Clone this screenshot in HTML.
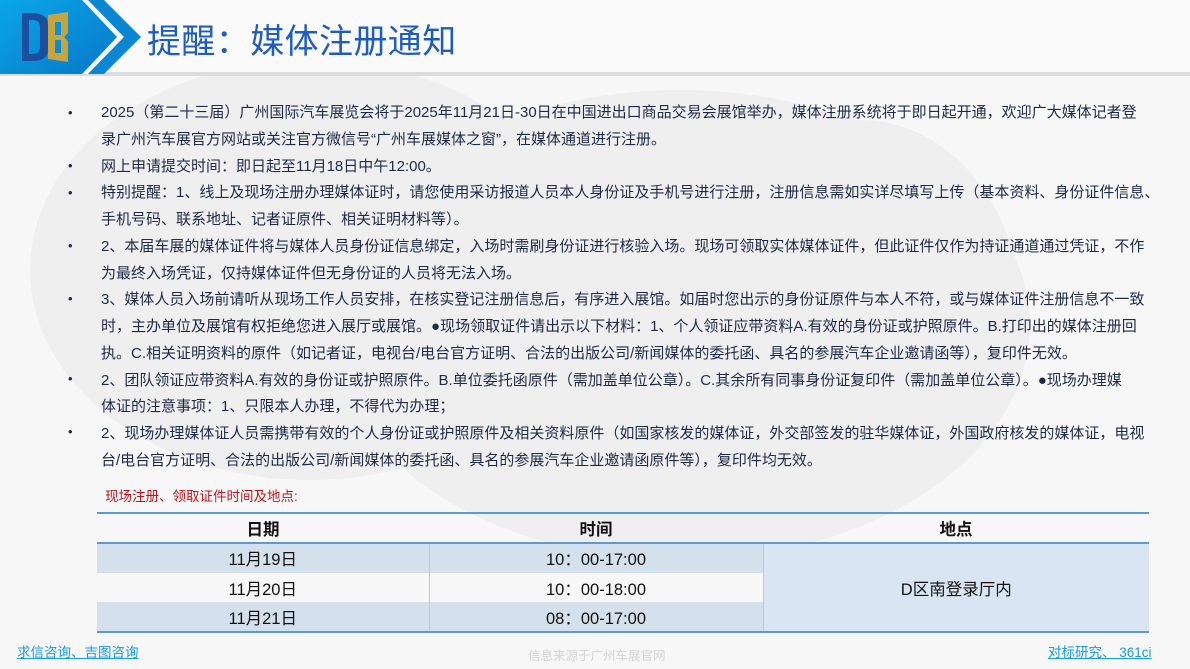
<!DOCTYPE html>
<html><head><meta charset="utf-8"><style>
*{margin:0;padding:0;box-sizing:border-box}
body{width:1190px;height:669px;overflow:hidden;position:relative;background:#f7f7f7;font-family:"Liberation Sans","Noto Sans CJK SC",sans-serif;}
.blob{position:absolute;background:#efefef;border-radius:50%}
.hdr{position:absolute;left:0;top:0;width:1190px;height:72px;background:#fafafa}
.hline{position:absolute;left:0;top:72px;width:1190px;height:4px;background:#dcdcdc}
.title{position:absolute;left:147px;top:14px;font-size:34px;color:#1f5cc0;white-space:nowrap;font-family:"Noto Sans CJK SC",sans-serif;letter-spacing:0.4px}
.txt{position:absolute;left:101px;top:100px;font-size:15px;line-height:26.75px;color:#1e2a46;white-space:nowrap}
.b{position:absolute;left:68px;font-size:13px;color:#1e2a46}
.red{position:absolute;left:105px;top:485px;font-size:13.5px;color:#c0141c;white-space:nowrap}
table{position:absolute;left:97px;top:512px;width:1052px;border-collapse:collapse;font-size:16.5px;color:#111}
td,th{text-align:center;height:29.7px;padding:0}
th{font-weight:bold;border-top:2px solid #5b9bd5;border-bottom:2px solid #5b9bd5;height:30px}
tr:last-child td,td.loc{border-bottom:2px solid #5b9bd5}
.s td{background:#d4e0eb}
.loc{background:#d9e5f2!important}
td.c1{border-right:1px solid #b8c9dc}
.f{position:absolute;top:641px;font-size:13.5px;color:#1a9ae8;text-decoration:underline;white-space:nowrap}
</style></head><body>
<div class="blob" style="left:30px;top:60px;width:560px;height:420px"></div>
<div class="blob" style="left:330px;top:90px;width:700px;height:470px"></div>
<div class="blob" style="left:700px;top:120px;width:320px;height:380px"></div>
<div class="hdr"></div>
<div class="hline"></div>
<svg style="position:absolute;left:0;top:0" width="145" height="74">
<defs><linearGradient id="g" x1="0" y1="0" x2="1" y2="1"><stop offset="0" stop-color="#0aa6e8"/><stop offset="1" stop-color="#0877c8"/></linearGradient></defs>
<polygon points="0,0 84,0 118,37 84,74 0,74" fill="url(#g)"/>
<polygon points="86,0 104,0 141,37 104,74 86,74 122,37" fill="#0b86d2"/>
<polygon points="82,0 88,0 124,37 88,74 82,74 117,37" fill="#fff" opacity=".9"/>
<path d="M22 13 h10 q16 0 16 12 v24 q0 12 -16 12 h-10 z M29 20 v34 h3 q8 0 8 -7 v-20 q0 -7 -8 -7z" fill="#1a4fa0"/>
<path d="M48 15 l20 -3 v21 l-4 4 l4 4 v21 l-20 -3 z M55 22 v13 l6 0 v-13z M55 40 v13 l6 0 v-13z" fill="#c8a43c"/>
</svg>
<div class="title">提醒：媒体注册通知</div>
<div class="b" style="top:105px">•</div>
<div class="b" style="top:158px">•</div>
<div class="b" style="top:185px">•</div>
<div class="b" style="top:238px">•</div>
<div class="b" style="top:291px">•</div>
<div class="b" style="top:371px">•</div>
<div class="b" style="top:424px">•</div>
<div class="txt">2025（第二十三届）广州国际汽车展览会将于2025年11月21日-30日在中国进出口商品交易会展馆举办，媒体注册系统将于即日起开通，欢迎广大媒体记者登<br>录广州汽车展官方网站或关注官方微信号“广州车展媒体之窗”，在媒体通道进行注册。<br>网上申请提交时间：即日起至11月18日中午12:00。<br>特别提醒：1、线上及现场注册办理媒体证时，请您使用采访报道人员本人身份证及手机号进行注册，注册信息需如实详尽填写上传（基本资料、身份证件信息、<br>手机号码、联系地址、记者证原件、相关证明材料等）。<br>2、本届车展的媒体证件将与媒体人员身份证信息绑定，入场时需刷身份证进行核验入场。现场可领取实体媒体证件，但此证件仅作为持证通道通过凭证，不作<br>为最终入场凭证，仅持媒体证件但无身份证的人员将无法入场。<br>3、媒体人员入场前请听从现场工作人员安排，在核实登记注册信息后，有序进入展馆。如届时您出示的身份证原件与本人不符，或与媒体证件注册信息不一致<br>时，主办单位及展馆有权拒绝您进入展厅或展馆。●现场领取证件请出示以下材料：1、个人领证应带资料A.有效的身份证或护照原件。B.打印出的媒体注册回<br>执。C.相关证明资料的原件（如记者证，电视台/电台官方证明、合法的出版公司/新闻媒体的委托函、具名的参展汽车企业邀请函等），复印件无效。<br>2、团队领证应带资料A.有效的身份证或护照原件。B.单位委托函原件（需加盖单位公章）。C.其余所有同事身份证复印件（需加盖单位公章）。●现场办理媒<br>体证的注意事项：1、只限本人办理，不得代为办理；<br>2、现场办理媒体证人员需携带有效的个人身份证或护照原件及相关资料原件（如国家核发的媒体证，外交部签发的驻华媒体证，外国政府核发的媒体证，电视<br>台/电台官方证明、合法的出版公司/新闻媒体的委托函、具名的参展汽车企业邀请函原件等），复印件均无效。</div>
<div class="red">现场注册、领取证件时间及地点:</div>
<table>
<tr><th style="width:332px">日期</th><th style="width:334px">时间</th><th>地点</th></tr>
<tr class="s"><td class="c1">11月19日</td><td class="c1">10：00-17:00</td><td class="loc" rowspan="3">D区南登录厅内</td></tr>
<tr><td class="c1">11月20日</td><td class="c1">10：00-18:00</td></tr>
<tr class="s"><td class="c1">11月21日</td><td class="c1">08：00-17:00</td></tr>
</table>
<div class="f" style="left:17px">求信咨询、吉图咨询</div>
<div class="f" style="left:528px;top:645px;color:#d4d4d4;text-decoration:none;font-size:12.5px">信息来源于广州车展官网</div>
<div class="f" style="left:1048px">对标研究、 361ci</div>
</body></html>
